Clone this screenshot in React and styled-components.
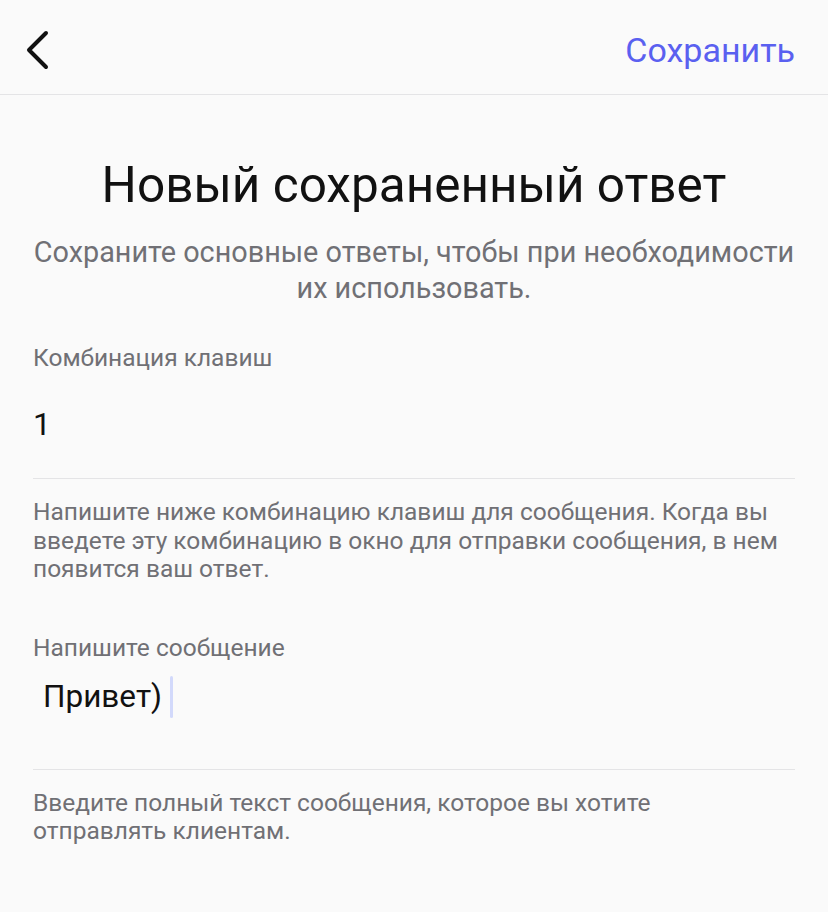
import React from 'react';
import styled, { createGlobalStyle } from 'styled-components';

const GlobalStyle = createGlobalStyle`
  html, body {
    margin: 0;
    padding: 0;
    background: #fafafa;
  }
  body {
    font-family: Roboto, 'Noto Sans', sans-serif;
    -webkit-font-smoothing: antialiased;
  }
`;

const Page = styled.div`
  min-height: 912px;
  background: #fafafa;
`;

const Header = styled.header`
  box-sizing: border-box;
  height: 95px;
  display: flex;
  align-items: center;
  justify-content: space-between;
  padding: 6px 33px 0 22px;
  border-bottom: 1px solid #e4e4e6;
`;

const BackButton = styled.button`
  border: none;
  background: none;
  padding: 0;
  display: flex;
  cursor: pointer;
`;

const SaveButton = styled.button`
  border: none;
  background: none;
  padding: 0;
  font-family: inherit;
  font-size: 34px;
  line-height: 40px;
  color: #5a60f0;
  cursor: pointer;
`;

const Content = styled.main`
  padding: 0 33px;
`;

const Title = styled.h1`
  margin: 60px 0 0;
  font-size: 49.5px;
  line-height: 60px;
  font-weight: 400;
  color: #111;
  text-align: center;
`;

const Subtitle = styled.p`
  margin: 19px -20px 0;
  font-size: 28.8px;
  line-height: 36px;
  color: #707075;
  text-align: center;
`;

const Field = styled.section`
  margin-top: ${p => p.gap}px;
`;

const Label = styled.div`
  font-size: 24.5px;
  line-height: 30px;
  color: #707075;
`;

const Value = styled.div`
  display: flex;
  align-items: center;
  margin-top: ${p => p.gap}px;
  padding-left: ${p => p.indent || 0}px;
  padding-bottom: ${p => p.bottom}px;
  border-bottom: 1px solid #e4e4e6;
  font-size: ${p => p.size}px;
  line-height: ${p => p.lh}px;
  color: #111;
`;

const Cursor = styled.span`
  display: inline-block;
  width: 3px;
  height: 42px;
  margin-left: 8px;
  border-radius: 2px;
  background: #d2d9fb;
`;

const Hint = styled.p`
  margin: ${p => p.gap}px -20px 0 0;
  font-size: 24.5px;
  line-height: 28.5px;
  color: #707075;
  white-space: nowrap;
`;

const Chevron = () => (
  <svg width="30" height="40" viewBox="0 0 30 40" fill="none">
    <path d="M24 3 L7 20 L24 37" stroke="#111" strokeWidth="4" strokeLinecap="round" strokeLinejoin="round" />
  </svg>
);

export default function App() {
  return (
    <Page>
      <GlobalStyle />
      <Header>
        <BackButton aria-label="Назад">
          <Chevron />
        </BackButton>
        <SaveButton>Сохранить</SaveButton>
      </Header>
      <Content>
        <Title>Новый сохраненный ответ</Title>
        <Subtitle>
          Сохраните основные ответы, чтобы при необходимости
          <br />
          их использовать.
        </Subtitle>

        <Field gap={37}>
          <Label>Комбинация клавиш</Label>
          <Value gap={31} bottom={34} size={32} lh={40}>1</Value>
          <Hint gap={19}>
            Напишите ниже комбинацию клавиш для сообщения. Когда вы
            <br />
            введете эту комбинацию в окно для отправки сообщения, в нем
            <br />
            появится ваш ответ.
          </Hint>
        </Field>

        <Field gap={49}>
          <Label>Напишите сообщение</Label>
          <Value gap={13} bottom={51} size={31.5} lh={42} indent={10}>
            Привет)
            <Cursor />
          </Value>
          <Hint gap={19}>
            Введите полный текст сообщения, которое вы хотите
            <br />
            отправлять клиентам.
          </Hint>
        </Field>
      </Content>
    </Page>
  );
}
